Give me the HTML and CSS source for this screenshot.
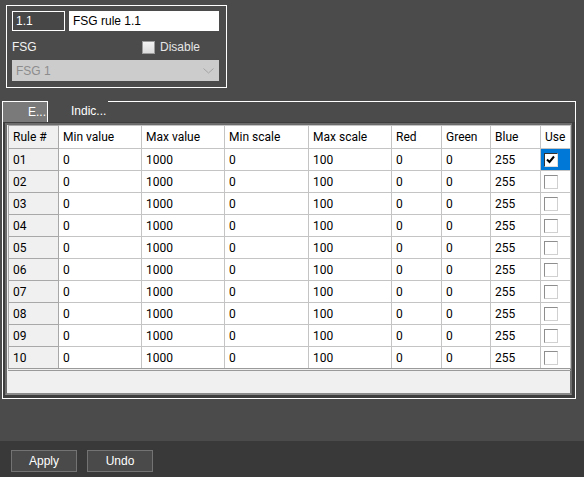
FILE: index.html
```html
<!DOCTYPE html>
<html lang="en">
<head>
    <meta charset="UTF-8">
    <title>FSG Rule</title>
    <link rel="stylesheet" href="styles.css">
</head>
<body>
    <div class="main">
        <div class="group">
            <div class="group-row">
                <div class="field dark">1.1</div>
                <div class="field light">FSG rule 1.1</div>
            </div>
            <div class="group-row options">
                <span class="label">FSG</span>
                <span class="check-box"></span>
                <span class="check-label">Disable</span>
            </div>
            <div class="dropdown">
                <span>FSG 1</span>
                <svg width="11" height="6" viewBox="0 0 11 6"><polyline points="0.5,0.5 5.5,5 10.5,0.5" fill="none" stroke="#a4a4a4" stroke-width="1"/></svg>
            </div>
        </div>

        <div class="tabs">
            <div class="tab active">E...</div>
            <div class="tab">Indic...</div>
            <div class="tab-fill"></div>
        </div>
        <div class="tab-body">
            <div class="grid-box">
                <table class="grid">
                    <colgroup>
                        <col style="width: 50px"><col style="width: 83px"><col style="width: 83px"><col style="width: 84px"><col style="width: 83px"><col style="width: 50px"><col style="width: 49px"><col style="width: 50px"><col style="width: 30px">
                    </colgroup>
                    <thead>
                        <tr>
                            <th class="row-head">Rule #</th>
                            <th>Min value</th>
                            <th>Max value</th>
                            <th>Min scale</th>
                            <th>Max scale</th>
                            <th>Red</th>
                            <th>Green</th>
                            <th>Blue</th>
                            <th>Use</th>
                        </tr>
                    </thead>
                    <tbody id="rows"></tbody>
                </table>
            </div>
        </div>
    </div>

    <div class="footer">
        <div class="button">Apply</div>
        <div class="button">Undo</div>
    </div>

    <script>
        // Build the ten rule rows
        const body = document.getElementById('rows');
        for (let i = 1; i <= 10; i++) {
            const num = i < 10 ? '0' + i : '' + i;
            const checked = i === 1;
            const tr = document.createElement('tr');
            tr.innerHTML =
                `<td class="row-head">${num}</td>` +
                `<td>0</td><td>1000</td><td>0</td><td>100</td>` +
                `<td>0</td><td>0</td><td>255</td>` +
                `<td class="use${checked ? ' selected' : ''}"><span class="cell-check${checked ? ' checked' : ''}">` +
                (checked ? '<svg width="11" height="11" viewBox="0 0 11 11"><polyline points="2,5.5 4.5,8 9,2.5" fill="none" stroke="#000" stroke-width="2"/></svg>' : '') +
                `</span></td>`;
            body.appendChild(tr);
        }
    </script>
</body>
</html>
```

FILE: styles.css
```css
body {
    margin: 0;
    width: 584px;
    height: 477px;
    background-color: #4b4b4b;
    font-family: "Liberation Sans", Arial, sans-serif;
    font-size: 12px;
    color: #ffffff;
    display: flex;
    flex-direction: column;
    overflow: hidden;
}

.main {
    height: 441px;
    padding: 5px 0 0 2px;
    box-sizing: border-box;
}

/* top group box */
.group {
    margin-left: 4px;
    width: 221px;
    height: 83px;
    box-sizing: border-box;
    border: 1px solid #ffffff;
    padding: 5px 7px 0 5px;
}

.group-row {
    display: flex;
    gap: 4px;
}

.field {
    height: 20px;
    box-sizing: border-box;
    padding: 0 3px;
    line-height: 18px;
}

.field.dark {
    width: 53px;
    border: 1px solid #ffffff;
    background-color: #474747;
    color: #ffffff;
}

.field.light {
    width: 150px;
    border: 1px solid #ffffff;
    background-color: #ffffff;
    color: #000000;
}

.options {
    height: 29px;
    padding-top: 3px;
    box-sizing: border-box;
    align-items: center;
    gap: 0;
}

.options .label {
    width: 130px;
    color: #f2f2f2;
}

.check-box {
    width: 13px;
    height: 13px;
    box-sizing: border-box;
    border: 1px solid #9c9c9c;
    background: linear-gradient(#f4f4f4, #dcdcdc);
    margin-right: 5px;
}

.check-label {
    color: #e6e6e6;
}

.dropdown {
    width: 207px;
    height: 21px;
    box-sizing: border-box;
    background-color: #cccccc;
    color: #8c8c8c;
    display: flex;
    align-items: center;
    justify-content: space-between;
    padding: 0 5px 0 4px;
}

/* tabs */
.tabs {
    margin-top: 13px;
    display: flex;
    width: 574px;
    height: 21px;
}

.tab {
    width: 60px;
    box-sizing: border-box;
    padding-left: 23px;
    line-height: 21px;
    color: #ffffff;
}

.tab.active {
    width: 46px;
    padding-left: 25px;
    border: 1px solid #ffffff;
    border-bottom: none;
    background-color: #7a7a7a;
    line-height: 20px;
}

.tab-fill {
    flex: 1;
    border-top: 1px solid #ffffff;
    border-right: 1px solid #ffffff;
}

.tab-body {
    width: 574px;
    height: 277px;
    box-sizing: border-box;
    border: 1px solid #ffffff;
    border-top: none;
    padding: 1px 3px 3px 2px;
    background-color: #3e3e3e;
}

.grid-box {
    height: 100%;
    box-sizing: border-box;
    border: 2px solid #6c6c6c;
    border-bottom-color: #8a8a8a;
    background-color: #f0f0f0;
    padding-left: 1px;
}

/* data grid */
.grid {
    border-collapse: collapse;
    table-layout: fixed;
    width: 562px;
    font-family: Roboto, "Liberation Sans", sans-serif;
    font-size: 12px;
    color: #000000;
    border-bottom: 3px double #9a9a9a;
}

.grid th,
.grid td {
    height: 21px;
    padding: 0 0 0 4px;
    border: 1px solid #c4c4c4;
    background-color: #ffffff;
    text-align: left;
    font-weight: normal;
    white-space: nowrap;
    overflow: hidden;
}

.grid th {
    height: 22px;
}

.grid .row-head {
    background-color: #f0f0f0;
    border-color: #a8a8a8;
}

.grid td.use {
    padding: 0 0 0 3px;
}

.grid td.selected {
    background-color: #0078d7;
}

.cell-check {
    display: block;
    width: 14px;
    height: 14px;
    box-sizing: border-box;
    border: 1px solid;
    border-color: #8e8e8e #d0d0d0 #d0d0d0 #8e8e8e;
    background-color: #ffffff;
}

.cell-check.checked {
    border-color: #333333 #dddddd #dddddd #333333;
}

.cell-check svg {
    display: block;
}

/* bottom bar */
.footer {
    flex: 1;
    background-color: #393939;
    display: flex;
    gap: 10px;
    padding: 9px 0 0 11px;
    box-sizing: border-box;
}

.button {
    width: 66px;
    height: 22px;
    box-sizing: border-box;
    border: 1px solid #737373;
    background-color: #4a4a4a;
    color: #ffffff;
    text-align: center;
    line-height: 20px;
}
```
